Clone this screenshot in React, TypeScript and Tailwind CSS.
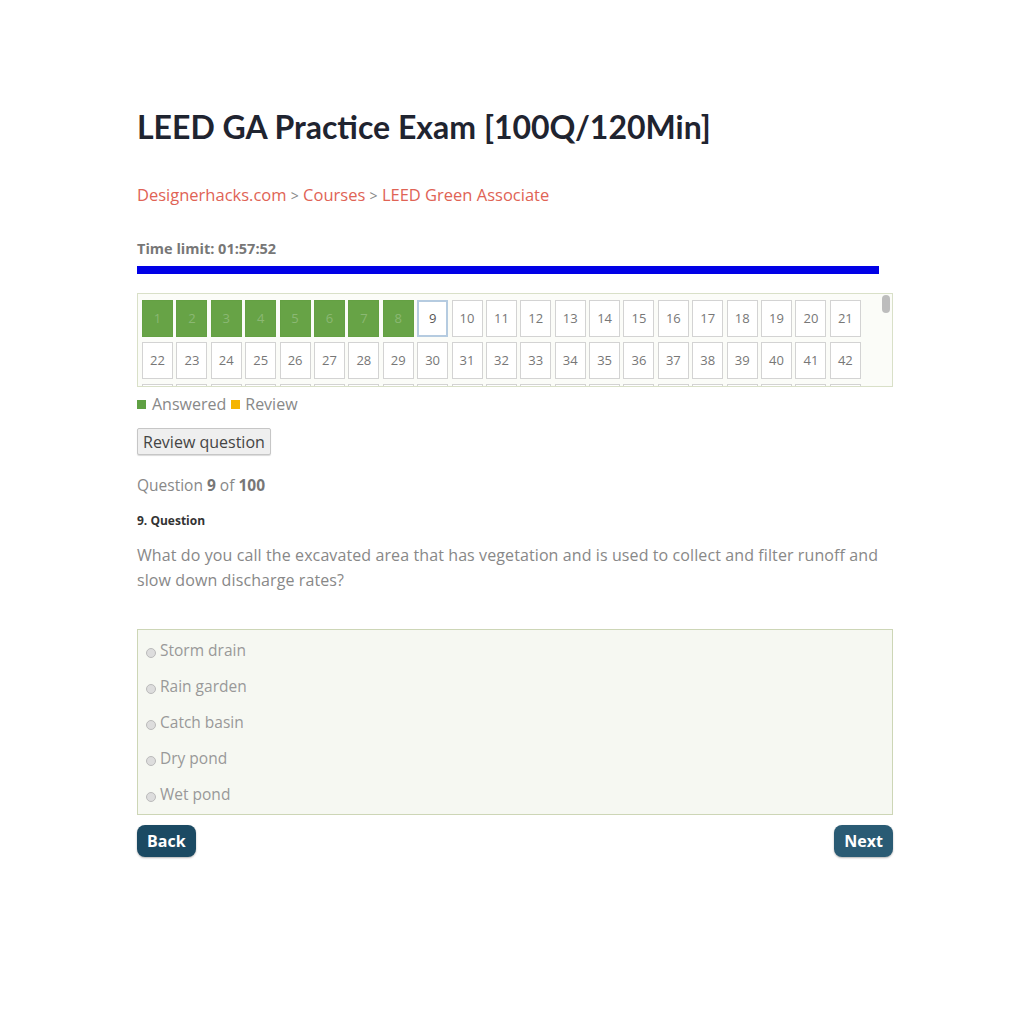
import React from "react";

const nums = Array.from({ length: 63 }, (_, i) => i + 1);
const options = ["Storm drain", "Rain garden", "Catch basin", "Dry pond", "Wet pond"];

export default function App() {
  return (
    <div className="min-h-[1024px] bg-white" style={{ fontFamily: "'Open Sans', Lato, sans-serif" }}>
      <div className="w-[756px] ml-[137px] pt-[107px]">
        <h1 className="text-[32px] leading-[40px] font-bold text-[#1f2430]" style={{ fontFamily: "Lato, sans-serif" }}>
          LEED GA Practice Exam [100Q/120Min]
        </h1>

        <div className="mt-[36px] text-[16.5px] leading-[24px] text-[#e06355]">
          Designerhacks.com <span className="text-[#888] text-[14px]">&gt;</span> Courses{" "}
          <span className="text-[#888] text-[14px]">&gt;</span> LEED Green Associate
        </div>

        <div className="mt-[31px] text-[14.5px] leading-[20px] font-bold text-[#777]">Time limit: 01:57:52</div>
        <div className="mt-[7px] h-[8px] w-[742px] bg-[#0000e6]" />

        <div className="relative mt-[19px] h-[94px] overflow-hidden border border-[#d9e0c8] bg-[#fbfcf8]">
          <div className="flex w-[730px] flex-wrap gap-x-[3.4px] gap-y-[5px] pl-[4px] pt-[6px]">
            {nums.map((n) => {
              const done = n < 9;
              const cur = n === 9;
              return (
                <div
                  key={n}
                  className={
                    "flex h-[37px] w-[31px] items-center justify-center text-[13px] " +
                    (done
                      ? "border border-[#64a043] bg-[#67a346] text-[#8bb873]"
                      : cur
                      ? "border-2 border-[#b5cbe0] bg-white text-[#555]"
                      : "border border-[#d3d3d3] bg-white text-[#777]")
                  }
                >
                  {n <= 42 ? n : ""}
                </div>
              );
            })}
          </div>
          <div className="absolute right-[2px] top-[1px] h-[18px] w-[8px] rounded-full bg-[#bdbdbd]" />
        </div>

        <div className="mt-[7px] flex items-center text-[16px] leading-[20px] text-[#888]">
          <span className="mr-[6px] inline-block h-[9px] w-[9px] bg-[#5fa043]" />
          Answered
          <span className="mx-[5px] inline-block h-[9px] w-[9px] bg-[#f5b400]" />
          Review
        </div>

        <button className="mt-[14px] h-[27px] rounded-[2px] border border-[#c6c6c6] bg-[#efefef] px-[5px] text-[16px] text-[#444] shadow-[0_1px_1px_rgba(0,0,0,0.15)]">
          Review question
        </button>

        <div className="mt-[20px] text-[15.5px] leading-[20px] text-[#888]">
          Question <span className="font-bold text-[#777]">9</span> of <span className="font-bold text-[#777]">100</span>
        </div>

        <div className="mt-[18px] text-[12px] leading-[16px] font-bold text-[#333]">9. Question</div>

        <p className="mt-[14px] text-[16px] leading-[25px] tracking-[0.1px] text-[#888]">
          What do you call the excavated area that has vegetation and is used to collect and filter runoff and
          slow down discharge rates?
        </p>

        <div className="mt-[36px] border border-[#cdd6b6] bg-[#f6f8f2] pb-[1px] pt-[3px]">
          {options.map((o) => (
            <div key={o} className="flex h-[36px] items-center pl-[8px] text-[15.5px] text-[#999]">
              <span className="mr-[4px] mt-[3px] inline-block h-[10px] w-[10px] rounded-full border border-[#bbb] bg-[#ddd]" />
              {o}
            </div>
          ))}
        </div>

        <div className="mt-[10px] flex justify-between">
          <button className="h-[32px] rounded-[8px] bg-[#1b4a63] px-[10px] text-[16px] font-bold text-white shadow-[0_1px_2px_rgba(0,0,0,0.3)]">
            Back
          </button>
          <button className="h-[32px] rounded-[8px] bg-[#2a5b74] px-[10px] text-[16px] font-bold text-white shadow-[0_1px_2px_rgba(0,0,0,0.3)]">
            Next
          </button>
        </div>
      </div>
    </div>
  );
}
